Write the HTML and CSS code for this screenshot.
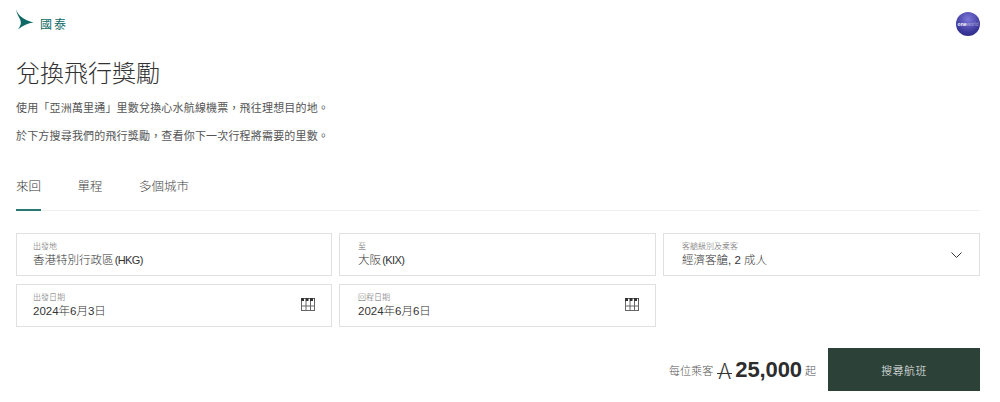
FILE: index.html
```html
<!DOCTYPE html>
<html lang="zh-TW">
<head>
    <meta charset="UTF-8">
    <meta name="viewport" content="width=device-width, initial-scale=1.0">
    <title>兌換飛行獎勵</title>
    <link rel="stylesheet" href="styles.css">
</head>
<body>
    <header class="top-bar">
        <div class="logo">
            <svg class="logo-wing" width="18" height="21" viewBox="0 0 18 21">
                <path d="M0 0 C1 3.500 3 6 5.500 8 C8.500 10.500 13 12.500 17.500 13.500 C12 14 7 16.500 2 20.500 C4.500 17 5.500 14.500 4.500 11.500 C3 8 0.500 4.500 0 0 Z" fill="#0f6a66"/>
            </svg>
            <span class="logo-text">國泰</span>
        </div>
        <div class="alliance">
            <span class="alliance-one">one</span><span class="alliance-world">world</span>
        </div>
    </header>

    <main class="content">
        <h1>兌換飛行獎勵</h1>
        <p class="intro">使用「亞洲萬里通」里數兌換心水航線機票，飛往理想目的地。</p>
        <p class="intro">於下方搜尋我們的飛行獎勵，查看你下一次行程將需要的里數。</p>

        <nav class="tabs">
            <span class="tab active">來回</span>
            <span class="tab">單程</span>
            <span class="tab">多個城市</span>
        </nav>

        <div class="form-grid">
            <div class="field">
                <div class="field-text">
                    <span class="field-label">出發地</span>
                    <span class="field-value">香港特別行政區 <span class="airport-code">(HKG)</span></span>
                </div>
            </div>
            <div class="field inset">
                <div class="field-text">
                    <span class="field-label">至</span>
                    <span class="field-value">大阪 <span class="airport-code">(KIX)</span></span>
                </div>
            </div>
            <div class="field inset">
                <div class="field-text">
                    <span class="field-label">客艙級別及乘客</span>
                    <span class="field-value">經濟客艙, 2 成人</span>
                </div>
                <svg class="chevron" width="11" height="6" viewBox="0 0 11 6">
                    <path d="M0.500 0.500 L5.500 5.500 L10.500 0.500" fill="none" stroke="#333" stroke-width="1"/>
                </svg>
            </div>
            <div class="field">
                <div class="field-text">
                    <span class="field-label">出發日期</span>
                    <span class="field-value">2024年6月3日</span>
                </div>
                <svg class="calendar" width="14" height="13" viewBox="0 0 14 13">
                    <rect x="0.500" y="0.500" width="13" height="12" fill="none" stroke="#666"/>
                    <path d="M0 1.500 H14" stroke="#333" stroke-width="3" stroke-dasharray="3 1.500"/>
                    <path d="M0 8 H14 M5 3 V13 M9.500 3 V13" stroke="#666" fill="none"/>
                </svg>
            </div>
            <div class="field inset">
                <div class="field-text">
                    <span class="field-label">回程日期</span>
                    <span class="field-value">2024年6月6日</span>
                </div>
                <svg class="calendar" width="14" height="13" viewBox="0 0 14 13">
                    <rect x="0.500" y="0.500" width="13" height="12" fill="none" stroke="#666"/>
                    <path d="M0 1.500 H14" stroke="#333" stroke-width="3" stroke-dasharray="3 1.500"/>
                    <path d="M0 8 H14 M5 3 V13 M9.500 3 V13" stroke="#666" fill="none"/>
                </svg>
            </div>
        </div>

        <div class="summary">
            <div class="price">
                <span class="price-label">每位乘客</span>
                <span class="price-unit">A</span>
                <span class="price-miles">25,000</span>
                <span class="price-from">起</span>
            </div>
            <button class="search-button">搜尋航班</button>
        </div>
    </main>
</body>
</html>
```

FILE: styles.css
```css
body {
    font-family: "Liberation Sans", "Noto Sans CJK TC", sans-serif;
    background-color: #ffffff;
    color: #2d2d2d;
    margin: 0;
    overflow: hidden;
}
.top-bar {
    display: flex;
    justify-content: space-between;
    align-items: flex-start;
    padding: 9px 20px 0 16px;
    height: 39px;
}
.logo {
    display: flex;
    align-items: flex-start;
    gap: 6px;
}
.logo-text {
    font-size: 12px;
    line-height: 14px;
    letter-spacing: 2px;
    margin-top: 9px;
    color: #0f6a66;
}
.alliance {
    width: 24px;
    height: 24px;
    margin-top: 3px;
    border-radius: 50%;
    background: radial-gradient(circle at 50% 30%, #7d78d8, #3a3699 65%, #26236f);
    display: flex;
    align-items: center;
    justify-content: center;
    font-size: 5px;
    line-height: 5px;
    color: #ffffff;
}
.alliance-one {
    font-weight: 700;
}
.alliance-world {
    opacity: 0.45;
}
.content {
    padding: 0 20px 0 16px;
}
h1 {
    font-family: "Noto Sans CJK TC", sans-serif;
    font-size: 24px;
    font-weight: 300;
    line-height: 32px;
    margin: 8px 0 11px;
    color: #333333;
}
.intro {
    font-family: "Noto Sans CJK TC", sans-serif;
    font-size: 11px;
    font-weight: 400;
    line-height: 16px;
    letter-spacing: 0.18px;
    color: #555555;
    margin: 0 0 12px;
}
.tabs {
    display: flex;
    gap: 36.5px;
    margin-top: 35px;
    border-bottom: 1px solid #f0f0f0;
}
.tab {
    font-size: 12.5px;
    font-weight: 300;
    line-height: 18px;
    padding-bottom: 14px;
    margin-bottom: -1px;
    color: #444444;
}
.tab.active {
    color: #333333;
    border-bottom: 2px solid #2a7a72;
    padding-bottom: 13px;
}
.form-grid {
    display: grid;
    grid-template-columns: 316px 317px 317px;
    gap: 8px 7px;
    margin-top: 22px;
}
.field {
    box-sizing: border-box;
    height: 43px;
    border: 1px solid #e0e0e0;
    display: flex;
    align-items: center;
    justify-content: space-between;
    padding: 0 16px 0 16px;
}
.field.inset {
    padding-left: 18px;
}
.field-text {
    display: flex;
    flex-direction: column;
    margin-top: -1px;
}
.field-label {
    font-size: 8px;
    font-weight: 300;
    line-height: 11px;
    color: #666666;
}
.field-value {
    font-size: 11.5px;
    font-weight: 300;
    line-height: 16px;
    color: #333333;
}
.airport-code {
    font-size: 11px;
    letter-spacing: -0.6px;
    margin-left: -2px;
}
.chevron {
    margin-right: 1px;
}
.calendar {
    margin-top: -3px;
}
.summary {
    display: flex;
    justify-content: flex-end;
    align-items: center;
    gap: 12px;
    margin-top: 21px;
}
.price {
    display: flex;
    align-items: center;
    gap: 4px;
}
.price-label {
    font-size: 11px;
    font-weight: 300;
    letter-spacing: 0.1px;
    color: #555555;
}
.price-unit {
    position: relative;
    width: 15px;
    text-align: center;
    font-family: "Noto Sans CJK TC", sans-serif;
    font-size: 21px;
    font-weight: 300;
    line-height: 24px;
    color: #333333;
}
.price-unit::after {
    content: "";
    position: absolute;
    left: 0;
    right: 0;
    top: 15px;
    height: 1px;
    background-color: #333333;
}
.price-miles {
    font-size: 22px;
    font-weight: 700;
    letter-spacing: -0.1px;
    margin-left: -1px;
    color: #2d2d2d;
}
.price-from {
    font-size: 11px;
    font-weight: 300;
    margin-left: -1px;
    color: #555555;
}
.search-button {
    width: 152px;
    height: 43px;
    background-color: #2c4238;
    color: #f0f0f0;
    border: none;
    font-family: inherit;
    font-size: 11px;
    font-weight: 300;
    letter-spacing: 0.4px;
}
```
